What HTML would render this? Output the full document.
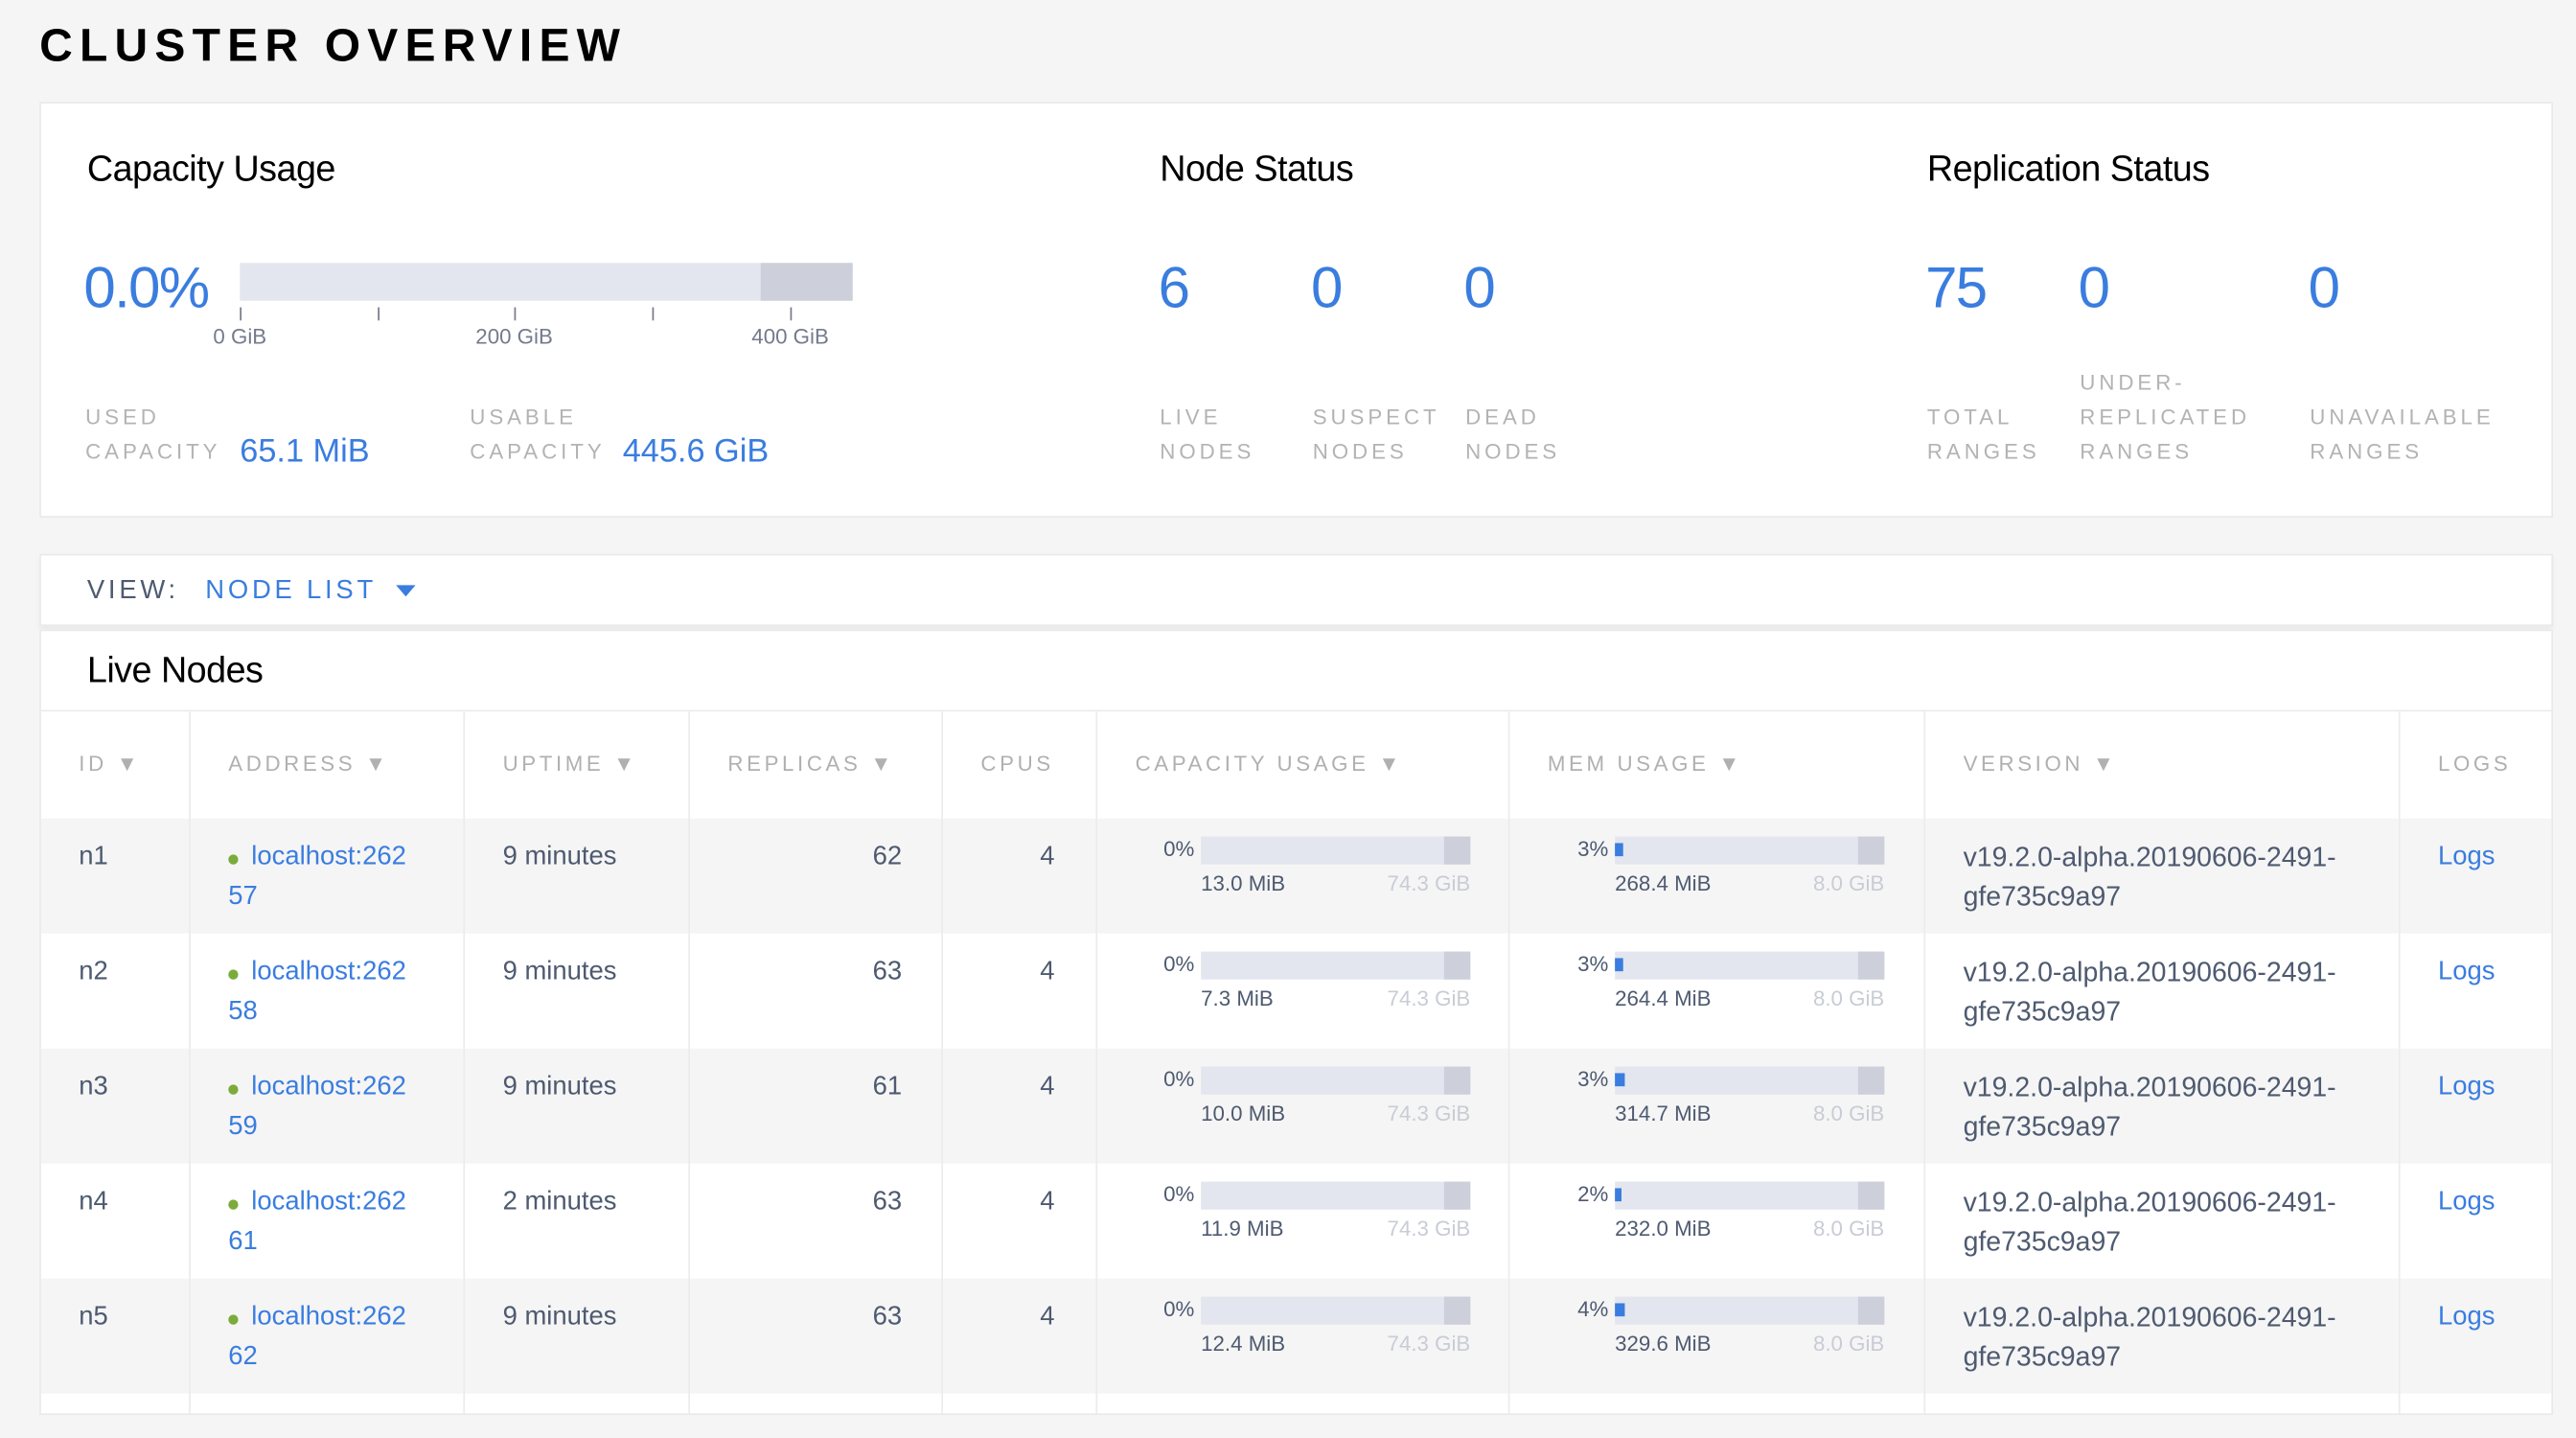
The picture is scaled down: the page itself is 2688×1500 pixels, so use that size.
<!DOCTYPE html>
<html><head><meta charset="utf-8"><style>
*{margin:0;padding:0;box-sizing:border-box}
html,body{width:2688px;height:1500px;overflow:hidden;background:#f5f5f5;font-family:"Liberation Sans",sans-serif}
#w{position:absolute;left:0;top:0;width:1568px;height:875px;transform:scale(1.714286);transform-origin:0 0}
.a{position:absolute}
.t{position:absolute;white-space:nowrap;line-height:20px}
.card{position:absolute;background:#fff;border:1px solid #e9e9e9}
.h2{font-size:22px;color:#000;letter-spacing:-0.3px}
.big{font-size:35px;color:#3a7ddf;line-height:40px}
.lbl{font-size:13px;color:#b3b3b3;letter-spacing:2.3px}
.val{font-size:20px;color:#3a7ddf}
.tick{position:absolute;width:1px;height:8px;background:#777b8c;top:187px}
.tl{font-size:13px;color:#747a8c;transform:translateX(-50%)}
.hd{font-size:13px;color:#b0b0b0;letter-spacing:2.1px;top:455px}
.vl{position:absolute;top:433px;height:427px;width:1px;background:#ececec}
.row{position:absolute;left:25px;width:1528px;height:70px}
.g{background:#f5f5f5}
.c{position:absolute;white-space:nowrap;line-height:24px;font-size:16px;color:#4e5a70}
.v{font-size:16.6px}
.lk{color:#3a7ddf}
.dot{position:absolute;width:6px;height:6px;border-radius:3px;background:#7bab3b}
.bar{position:absolute;height:17px;background:#e3e6ee;top:11px}
.bar i{position:absolute;right:0;top:0;height:17px;width:16px;background:#cdd0da}
.bar b{position:absolute;left:0;top:4px;height:8px;width:5px;background:#3a7ddf}
.sm{position:absolute;white-space:nowrap;font-size:13px;line-height:16px;color:#4e5a70}
.lt{color:#c9ccd5}
.r{position:absolute;left:0;width:1568px;height:70px;top:1px}
</style></head><body><div id="w">
<div class="t" style="left:24px;top:12px;line-height:32px;font-size:28px;font-weight:bold;letter-spacing:4.2px;color:#000">CLUSTER OVERVIEW</div>

<div class="card" style="left:24px;top:62px;width:1530px;height:253px"></div>
<div class="t h2" style="left:53px;top:91px;line-height:24px">Capacity Usage</div>
<div class="t big" style="left:51px;top:156px;letter-spacing:-1px">0.0%</div>
<div class="a" style="left:146px;top:160px;width:373px;height:23px;background:#e3e6ee"></div>
<div class="a" style="left:463px;top:160px;width:56px;height:23px;background:#cdd0da"></div>
<div class="tick" style="left:146px"></div><div class="tick" style="left:230px"></div><div class="tick" style="left:313px"></div><div class="tick" style="left:397px"></div><div class="tick" style="left:481px"></div>
<div class="t tl" style="left:146px;top:195px">0 GiB</div>
<div class="t tl" style="left:313px;top:195px">200 GiB</div>
<div class="t tl" style="left:481px;top:195px">400 GiB</div>
<div class="t lbl" style="left:52px;top:244px">USED</div>
<div class="t lbl" style="left:52px;top:265px">CAPACITY</div>
<div class="t val" style="left:146px;top:265px">65.1 MiB</div>
<div class="t lbl" style="left:286px;top:244px">USABLE</div>
<div class="t lbl" style="left:286px;top:265px">CAPACITY</div>
<div class="t val" style="left:379px;top:265px">445.6 GiB</div>

<div class="t h2" style="left:706px;top:91px;line-height:24px">Node Status</div>
<div class="t big" style="left:705px;top:156px">6</div>
<div class="t big" style="left:798px;top:156px">0</div>
<div class="t big" style="left:891px;top:156px">0</div>
<div class="t lbl" style="left:706px;top:244px">LIVE</div><div class="t lbl" style="left:706px;top:265px">NODES</div>
<div class="t lbl" style="left:799px;top:244px">SUSPECT</div><div class="t lbl" style="left:799px;top:265px">NODES</div>
<div class="t lbl" style="left:892px;top:244px">DEAD</div><div class="t lbl" style="left:892px;top:265px">NODES</div>

<div class="t h2" style="left:1173px;top:91px;line-height:24px">Replication Status</div>
<div class="t big" style="left:1172px;top:156px;letter-spacing:-1px">75</div>
<div class="t big" style="left:1265px;top:156px">0</div>
<div class="t big" style="left:1405px;top:156px">0</div>
<div class="t lbl" style="left:1173px;top:244px">TOTAL</div><div class="t lbl" style="left:1173px;top:265px">RANGES</div>
<div class="t lbl" style="left:1266px;top:223px">UNDER-</div><div class="t lbl" style="left:1266px;top:244px">REPLICATED</div><div class="t lbl" style="left:1266px;top:265px">RANGES</div>
<div class="t lbl" style="left:1406px;top:244px">UNAVAILABLE</div><div class="t lbl" style="left:1406px;top:265px">RANGES</div>

<div class="card" style="left:24px;top:337px;width:1530px;height:44px;box-shadow:0 2px 3px rgba(0,0,0,.06)"></div>
<div class="t" style="left:53px;top:350px;font-size:16px;letter-spacing:2.2px;color:#4e5a70">VIEW:</div>
<div class="t" style="left:125px;top:350px;font-size:16px;letter-spacing:2.2px;color:#3a7ddf">NODE LIST</div>
<svg class="a" style="left:241px;top:356px" width="12" height="8"><path d="M0 0H12L6 7Z" fill="#3a7ddf"/></svg>

<div class="card" style="left:24px;top:383px;width:1530px;height:478px"></div>
<div class="t h2" style="left:53px;top:396px;line-height:24px">Live Nodes</div>
<div class="a" style="left:24px;top:432px;width:1530px;height:1px;background:#ececec"></div>

<div class="row g" style="top:498px"></div>
<div class="row" style="top:568px"></div>
<div class="row g" style="top:638px"></div>
<div class="row" style="top:708px"></div>
<div class="row g" style="top:778px"></div>

<div class="vl" style="left:115px"></div><div class="vl" style="left:282px"></div><div class="vl" style="left:419px"></div><div class="vl" style="left:573px"></div><div class="vl" style="left:667px"></div><div class="vl" style="left:918px"></div><div class="vl" style="left:1171px"></div><div class="vl" style="left:1460px"></div>

<div class="t hd" style="left:48px">ID ▼</div>
<div class="t hd" style="left:139px">ADDRESS ▼</div>
<div class="t hd" style="left:306px">UPTIME ▼</div>
<div class="t hd" style="left:443px">REPLICAS ▼</div>
<div class="t hd" style="left:597px">CPUS</div>
<div class="t hd" style="left:691px">CAPACITY USAGE ▼</div>
<div class="t hd" style="left:942px">MEM USAGE ▼</div>
<div class="t hd" style="left:1195px">VERSION ▼</div>
<div class="t hd" style="left:1484px">LOGS</div>

<div class="a" style="left:0;top:498px;width:1568px;height:70px"><div class="r">
<div class="c" style="left:48px;top:11px">n1</div><div class="dot" style="left:139px;top:21px"></div>
<div class="c lk" style="left:153px;top:11px">localhost:262</div><div class="c lk" style="left:139px;top:35px">57</div>
<div class="c" style="left:306px;top:11px">9 minutes</div>
<div class="c" style="right:1019px;top:11px">62</div><div class="c" style="right:926px;top:11px">4</div>
<div class="sm" style="right:841px;top:10px">0%</div><div class="bar" style="left:731px;width:164px;top:10px"><i></i></div>
<div class="sm" style="left:731px;top:31px">13.0 MiB</div><div class="sm lt" style="right:673px;top:31px">74.3 GiB</div>
<div class="sm" style="right:589px;top:10px">3%</div><div class="bar" style="left:983px;width:164px;top:10px"><b></b><i></i></div>
<div class="sm" style="left:983px;top:31px">268.4 MiB</div><div class="sm lt" style="right:421px;top:31px">8.0 GiB</div>
<div class="c v" style="left:1195px;top:11px">v19.2.0-alpha.20190606-2491-</div><div class="c v" style="left:1195px;top:35px">gfe735c9a97</div>
<div class="c lk" style="left:1484px;top:11px">Logs</div>
</div></div>
<div class="a" style="left:0;top:568px;width:1568px;height:70px"><div class="r">
<div class="c" style="left:48px;top:11px">n2</div><div class="dot" style="left:139px;top:21px"></div>
<div class="c lk" style="left:153px;top:11px">localhost:262</div><div class="c lk" style="left:139px;top:35px">58</div>
<div class="c" style="left:306px;top:11px">9 minutes</div>
<div class="c" style="right:1019px;top:11px">63</div><div class="c" style="right:926px;top:11px">4</div>
<div class="sm" style="right:841px;top:10px">0%</div><div class="bar" style="left:731px;width:164px;top:10px"><i></i></div>
<div class="sm" style="left:731px;top:31px">7.3 MiB</div><div class="sm lt" style="right:673px;top:31px">74.3 GiB</div>
<div class="sm" style="right:589px;top:10px">3%</div><div class="bar" style="left:983px;width:164px;top:10px"><b></b><i></i></div>
<div class="sm" style="left:983px;top:31px">264.4 MiB</div><div class="sm lt" style="right:421px;top:31px">8.0 GiB</div>
<div class="c v" style="left:1195px;top:11px">v19.2.0-alpha.20190606-2491-</div><div class="c v" style="left:1195px;top:35px">gfe735c9a97</div>
<div class="c lk" style="left:1484px;top:11px">Logs</div>
</div></div>
<div class="a" style="left:0;top:638px;width:1568px;height:70px"><div class="r">
<div class="c" style="left:48px;top:11px">n3</div><div class="dot" style="left:139px;top:21px"></div>
<div class="c lk" style="left:153px;top:11px">localhost:262</div><div class="c lk" style="left:139px;top:35px">59</div>
<div class="c" style="left:306px;top:11px">9 minutes</div>
<div class="c" style="right:1019px;top:11px">61</div><div class="c" style="right:926px;top:11px">4</div>
<div class="sm" style="right:841px;top:10px">0%</div><div class="bar" style="left:731px;width:164px;top:10px"><i></i></div>
<div class="sm" style="left:731px;top:31px">10.0 MiB</div><div class="sm lt" style="right:673px;top:31px">74.3 GiB</div>
<div class="sm" style="right:589px;top:10px">3%</div><div class="bar" style="left:983px;width:164px;top:10px"><b style="width:6px"></b><i></i></div>
<div class="sm" style="left:983px;top:31px">314.7 MiB</div><div class="sm lt" style="right:421px;top:31px">8.0 GiB</div>
<div class="c v" style="left:1195px;top:11px">v19.2.0-alpha.20190606-2491-</div><div class="c v" style="left:1195px;top:35px">gfe735c9a97</div>
<div class="c lk" style="left:1484px;top:11px">Logs</div>
</div></div>
<div class="a" style="left:0;top:708px;width:1568px;height:70px"><div class="r">
<div class="c" style="left:48px;top:11px">n4</div><div class="dot" style="left:139px;top:21px"></div>
<div class="c lk" style="left:153px;top:11px">localhost:262</div><div class="c lk" style="left:139px;top:35px">61</div>
<div class="c" style="left:306px;top:11px">2 minutes</div>
<div class="c" style="right:1019px;top:11px">63</div><div class="c" style="right:926px;top:11px">4</div>
<div class="sm" style="right:841px;top:10px">0%</div><div class="bar" style="left:731px;width:164px;top:10px"><i></i></div>
<div class="sm" style="left:731px;top:31px">11.9 MiB</div><div class="sm lt" style="right:673px;top:31px">74.3 GiB</div>
<div class="sm" style="right:589px;top:10px">2%</div><div class="bar" style="left:983px;width:164px;top:10px"><b style="width:4px"></b><i></i></div>
<div class="sm" style="left:983px;top:31px">232.0 MiB</div><div class="sm lt" style="right:421px;top:31px">8.0 GiB</div>
<div class="c v" style="left:1195px;top:11px">v19.2.0-alpha.20190606-2491-</div><div class="c v" style="left:1195px;top:35px">gfe735c9a97</div>
<div class="c lk" style="left:1484px;top:11px">Logs</div>
</div></div>
<div class="a" style="left:0;top:778px;width:1568px;height:70px"><div class="r">
<div class="c" style="left:48px;top:11px">n5</div><div class="dot" style="left:139px;top:21px"></div>
<div class="c lk" style="left:153px;top:11px">localhost:262</div><div class="c lk" style="left:139px;top:35px">62</div>
<div class="c" style="left:306px;top:11px">9 minutes</div>
<div class="c" style="right:1019px;top:11px">63</div><div class="c" style="right:926px;top:11px">4</div>
<div class="sm" style="right:841px;top:10px">0%</div><div class="bar" style="left:731px;width:164px;top:10px"><i></i></div>
<div class="sm" style="left:731px;top:31px">12.4 MiB</div><div class="sm lt" style="right:673px;top:31px">74.3 GiB</div>
<div class="sm" style="right:589px;top:10px">4%</div><div class="bar" style="left:983px;width:164px;top:10px"><b style="width:6px"></b><i></i></div>
<div class="sm" style="left:983px;top:31px">329.6 MiB</div><div class="sm lt" style="right:421px;top:31px">8.0 GiB</div>
<div class="c v" style="left:1195px;top:11px">v19.2.0-alpha.20190606-2491-</div><div class="c v" style="left:1195px;top:35px">gfe735c9a97</div>
<div class="c lk" style="left:1484px;top:11px">Logs</div>
</div></div>
</div></body></html>
